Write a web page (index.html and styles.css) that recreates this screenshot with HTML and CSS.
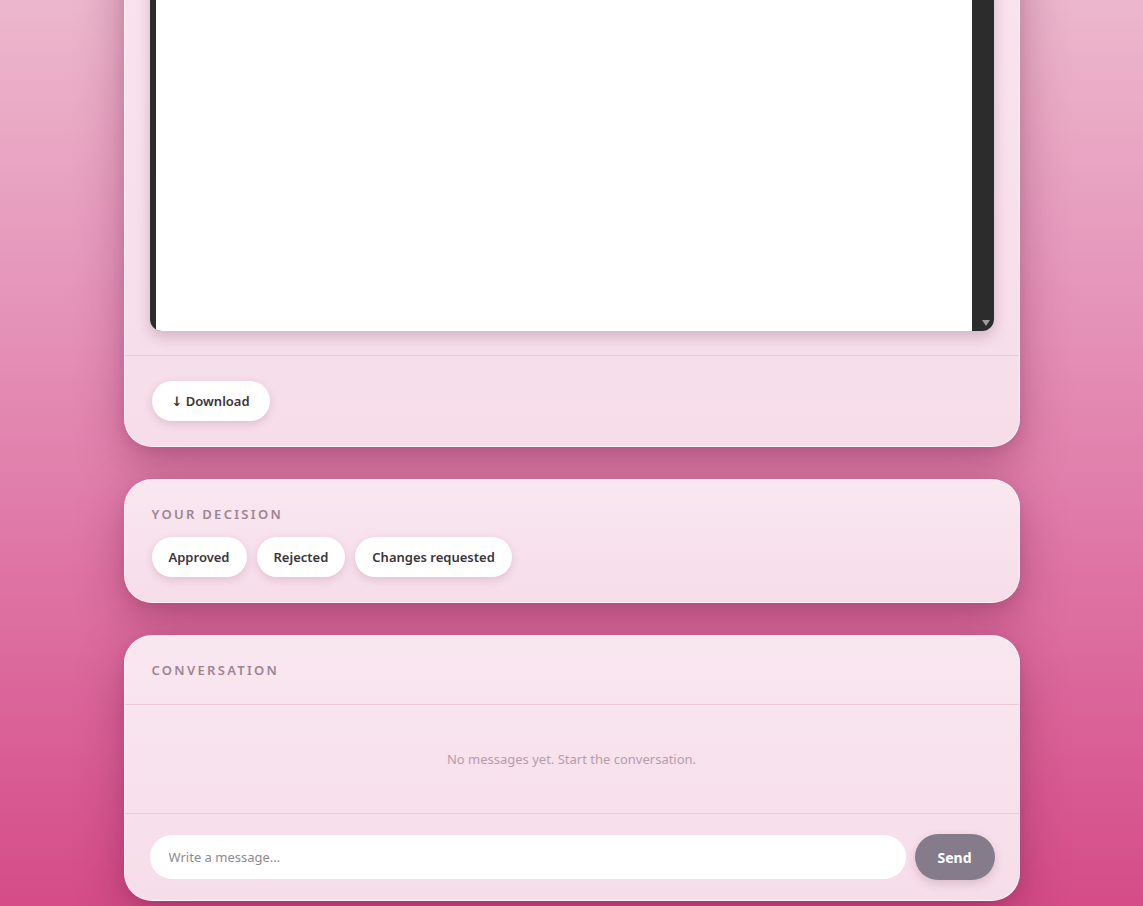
FILE: index.html
```html
<!DOCTYPE html>
<html lang="en">
<head>
<meta charset="utf-8">
<title>Review</title>
<link rel="stylesheet" href="styles.css">
</head>
<body>
<main class="page">
  <section class="card preview-card">
    <div class="preview-body">
      <div class="frame">
        <div class="frame-doc"></div>
        <div class="frame-scroll"><span class="scroll-arrow"></span></div>
      </div>
    </div>
    <div class="card-foot">
      <button class="pill">↓ Download</button>
    </div>
  </section>

  <section class="card decision-card">
    <h2 class="label">Your decision</h2>
    <div class="choices">
      <button class="pill">Approved</button>
      <button class="pill">Rejected</button>
      <button class="pill">Changes requested</button>
    </div>
  </section>

  <section class="card convo-card">
    <header class="convo-head">
      <h2 class="label">Conversation</h2>
    </header>
    <div class="convo-empty">No messages yet. Start the conversation.</div>
    <form class="composer">
      <input class="msg-input" type="text" placeholder="Write a message...">
      <button class="send" type="button">Send</button>
    </form>
  </section>
</main>
</body>
</html>
```

FILE: styles.css
```css
* { box-sizing: border-box; }
html, body { margin: 0; padding: 0; }
body {
  min-height: 100vh;
  background: linear-gradient(180deg, #ecb7cd 0%, #e48db5 40%, #dc6a9d 72%, #d54c88 100%);
  background-attachment: fixed;
  font-family: "Noto Sans", "Open Sans", "DejaVu Sans", sans-serif;
  color: #3a3338;
  overflow: hidden;
}
.page {
  width: 896px;
  margin: -298px auto 0;
  display: flex;
  flex-direction: column;
  gap: 32px;
  padding-bottom: 40px;
}
.card {
  background: linear-gradient(180deg, #f9e7f0 0%, #f6dde9 100%);
  border: 1px solid rgba(255,255,255,0.55);
  border-radius: 28px;
  box-shadow: 0 18px 48px rgba(110, 25, 65, 0.38), 0 4px 12px rgba(110, 25, 65, 0.12);
}
.preview-body {
  padding: 24px 25px 24px 25px;
}
.frame {
  height: 604px;
  display: flex;
  background: #2c2c2c;
  border-radius: 0 0 12px 12px;
  padding-left: 6px;
  box-shadow: 0 6px 14px rgba(90, 30, 60, 0.22);
  overflow: hidden;
}
.frame-doc {
  flex: 1;
  background: #ffffff;
}
.frame-scroll {
  width: 22px;
  display: flex;
  align-items: flex-end;
  justify-content: center;
  padding-bottom: 5px;
}
.scroll-arrow {
  width: 0; height: 0;
  border-left: 4.5px solid transparent;
  border-right: 4.5px solid transparent;
  border-top: 6px solid #9c9c9c;
  margin-left: 7px;
}
.card-foot {
  border-top: 1px solid #ebc9d8;
  padding: 25px 27px 25px;
}
.pill {
  font-family: inherit;
  font-size: 13px;
  font-weight: 600;
  color: #3b3438;
  background: #ffffff;
  border: none;
  border-radius: 999px;
  height: 40px;
  padding: 0 17px;
  box-shadow: 0 3px 9px rgba(120, 40, 80, 0.16);
  cursor: pointer;
}
.card-foot .pill { padding: 0 20px; }
.label {
  margin: 0;
  font-size: 13px;
  line-height: 20px;
  font-weight: 600;
  letter-spacing: 2.3px;
  text-transform: uppercase;
  color: #9b8591;
}
.decision-card {
  padding: 24px 27px 25px;
}
.decision-card .label { margin-bottom: 13px; }
.choices {
  display: flex;
  gap: 10px;
}
.convo-head {
  padding: 24px 27px 24px;
  border-bottom: 1px solid #ebc9d8;
}
.convo-empty {
  padding: 44px 20px;
  text-align: center;
  font-size: 13px;
  line-height: 20px;
  color: #b59cab;
  border-bottom: 1px solid #ebc9d8;
}
.composer {
  display: flex;
  align-items: center;
  gap: 9px;
  padding: 20px 24px 20px 25px;
  margin: 0;
}
.msg-input {
  flex: 1;
  height: 44px;
  border: none;
  border-radius: 999px;
  background: #ffffff;
  padding: 0 19px;
  font-family: inherit;
  font-size: 13px;
  color: #3a3338;
  outline: none;
}
.msg-input::placeholder { color: #8e8a8d; }
.send {
  width: 80px;
  height: 46px;
  border: none;
  border-radius: 999px;
  background: #857c8b;
  color: #ffffff;
  font-family: inherit;
  font-size: 14px;
  font-weight: 700;
  box-shadow: 0 4px 10px rgba(110, 40, 80, 0.18);
}
```
